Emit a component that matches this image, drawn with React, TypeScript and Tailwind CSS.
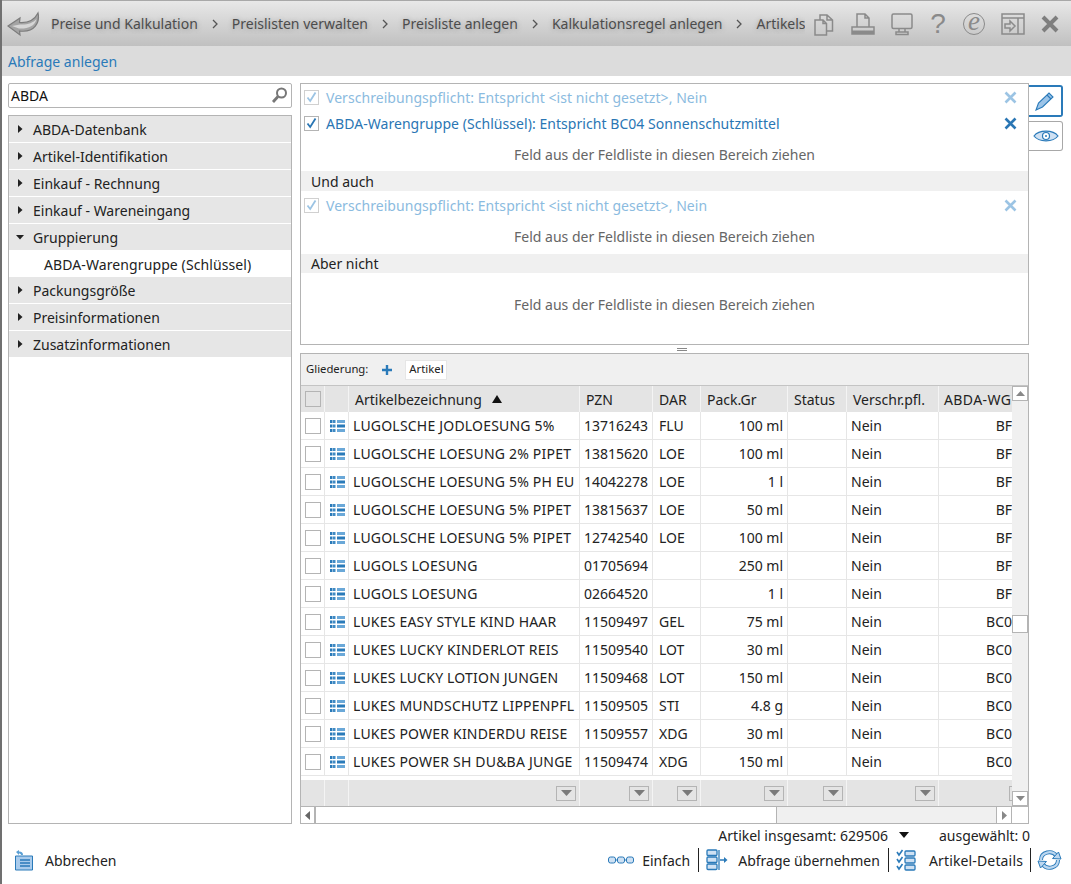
import React from 'react';

const crumbs = ['Preise und Kalkulation', 'Preislisten verwalten', 'Preisliste anlegen', 'Kalkulationsregel anlegen'];
const tree = ['ABDA-Datenbank', 'Artikel-Identifikation', 'Einkauf - Rechnung', 'Einkauf - Wareneingang'];
const treeBottom = ['Packungsgröße', 'Preisinformationen', 'Zusatzinformationen'];

const rows = [
  ['LUGOLSCHE JODLOESUNG 5%', '13716243', 'FLU', '100 ml', 'BF'],
  ['LUGOLSCHE LOESUNG 2% PIPET', '13815620', 'LOE', '100 ml', 'BF'],
  ['LUGOLSCHE LOESUNG 5% PH EU', '14042278', 'LOE', '1 l', 'BF'],
  ['LUGOLSCHE LOESUNG 5% PIPET', '13815637', 'LOE', '50 ml', 'BF'],
  ['LUGOLSCHE LOESUNG 5% PIPET', '12742540', 'LOE', '100 ml', 'BF'],
  ['LUGOLS LOESUNG', '01705694', '', '250 ml', 'BF'],
  ['LUGOLS LOESUNG', '02664520', '', '1 l', 'BF'],
  ['LUKES EASY STYLE KIND HAAR', '11509497', 'GEL', '75 ml', 'BC0'],
  ['LUKES LUCKY KINDERLOT REIS', '11509540', 'LOT', '30 ml', 'BC0'],
  ['LUKES LUCKY LOTION JUNGEN', '11509468', 'LOT', '150 ml', 'BC0'],
  ['LUKES MUNDSCHUTZ LIPPENPFL', '11509505', 'STI', '4.8 g', 'BC0'],
  ['LUKES POWER KINDERDU REISE', '11509557', 'XDG', '30 ml', 'BC0'],
  ['LUKES POWER SH DU&BA JUNGE', '11509474', 'XDG', '150 ml', 'BC0'],
];

const HeadIcon = ({ children }: { children: React.ReactNode }) => (
  <svg width="26" height="26" viewBox="0 0 26 26" fill="none" stroke="#8a8a8a" strokeWidth="1.5" className="shrink-0">
    {children}
  </svg>
);

const CloseX = ({ color }: { color: string }) => (
  <svg width="13" height="13" viewBox="0 0 13 13" stroke={color} strokeWidth="2.6" className="shrink-0">
    <path d="M1.5 1.5 L11.5 11.5 M11.5 1.5 L1.5 11.5" />
  </svg>
);

const Check = ({ color, border }: { color: string; border: string }) => (
  <svg width="15" height="15" viewBox="0 0 15 15" fill="none" className="shrink-0">
    <rect x="0.5" y="0.5" width="14" height="14" fill="#fff" stroke={border} />
    <path d="M3.5 7.5 L6.2 11 L11.5 2.5" stroke={color} strokeWidth="1.8" />
  </svg>
);

const ListIcon = () => (
  <svg width="15" height="12" viewBox="0 0 15 12" className="ml-[2px] shrink-0">
    {[0, 4.5, 9].map((y) => (
      <g key={y}>
        <rect x="0" y={y} width="2.5" height="3" fill="#2a7ab9" />
        <rect x="3" y={y} width="2.5" height="3" fill="#3f8ac4" />
        <rect x="7" y={y} width="8" height="3" fill={y === 4.5 ? '#2a7ab9' : '#6aa8d8'} />
      </g>
    ))}
  </svg>
);

const Triangle = ({ open }: { open?: boolean }) => (
  <svg width="8" height="8" viewBox="0 0 8 8" className="shrink-0">
    {open ? <path d="M0 2 H8 L4 6.5 Z" fill="#222" /> : <path d="M2 0 L6.5 4 L2 8 Z" fill="#222" />}
  </svg>
);

const Filter = () => (
  <div className="w-[20px] h-[15px] border border-[#b4b4b4] flex items-center justify-center shrink-0">
    <svg width="11" height="6" viewBox="0 0 11 6"><path d="M0 0 H11 L5.5 6 Z" fill="#7a7a7a" /></svg>
  </div>
);

const TreeItem = ({ label, open }: { label: string; open?: boolean }) => (
  <div className="h-[26px] mb-px bg-[#e6e6e6] flex items-center pl-[7px] gap-[9px] text-[14px] text-[#222]">
    <Triangle open={open} />
    <span>{label}</span>
  </div>
);

const Condition = ({ text, light }: { text: string; light?: boolean }) => (
  <div className={`flex items-center h-[26px] pl-[3px] pr-[11px] text-[14px] tracking-[0.05px] ${light ? 'text-[#8bbbe0]' : 'text-[#2a76b4]'}`}>
    <Check color={light ? '#9cc4e4' : '#2a76b4'} border={light ? '#d0d0d0' : '#b4b4b4'} />
    <span className="ml-[7px] flex-1">{text}</span>
    <CloseX color={light ? '#9cc4e4' : '#2a76b4'} />
  </div>
);

const DropHint = ({ className }: { className: string }) => (
  <div className={`flex items-center justify-center text-[14px] text-[#666] ${className}`}>
    Feld aus der Feldliste in diesen Bereich ziehen
  </div>
);

const Sep = () => <div className="w-px h-[24px] bg-[#222] shrink-0" />;

export default function App() {
  return (
    <div className="w-[1071px] h-[884px] overflow-hidden bg-white border-l-2 border-[#707070] flex flex-col text-[#222] font-['Noto_Sans','Open_Sans',sans-serif]">
      {/* Title bar */}
      <div className="h-[46px] shrink-0 border-t border-[#a8a8a8] bg-gradient-to-b from-[#e8e8e8] to-[#c0c0c0] flex items-center">
        <svg width="36" height="28" viewBox="0 0 36 28" className="ml-[5px] shrink-0">
          <path d="M1 16 L13 8 L12.5 12.5 C20 13 27 11 31 3 C33 12 28 23 12.5 21 L13 25 Z" fill="#a4a4a4" stroke="#7c7c7c" strokeWidth="1.2" />
          <path d="M5 16 L13 14.5 C20 15 26 13 29.5 9 C28 16 21 19 12 18.5 Z" fill="#d6d6d6" />
        </svg>
        <div className="ml-[8px] w-[754px] shrink-0 overflow-hidden flex items-center whitespace-nowrap text-[14px] text-[#4c4c4c] [text-shadow:0_1px_5px_#999]">
          {crumbs.map((c) => (
            <React.Fragment key={c}>
              <span className="shrink-0">{c}</span>
              <svg width="6" height="10" viewBox="0 0 6 10" fill="none" stroke="#555" strokeWidth="1.3" className="mx-[14px] shrink-0">
                <path d="M1 1 L5 5 L1 9" />
              </svg>
            </React.Fragment>
          ))}
          <span className="shrink-0">Artikels</span>
        </div>
        <div className="flex items-center ml-[6px]">
          <HeadIcon>
            <path d="M8 9 H12 L15.5 12.5 V24 H4 V9 Z M12 9 V12.5 H15.5" />
            <path d="M9 9 V4 H16 L21.5 9 V20 H15.5 M16 4 V9 H21.5" />
          </HeadIcon>
          <div className="ml-[13px]">
            <HeadIcon>
              <path d="M7 16 V3 H15 L19 7 V16 M15 3 V7 H19 M2 16 H24 V23 H2 Z" />
              <rect x="2" y="19.5" width="22" height="3.5" fill="#8a8a8a" stroke="none" />
            </HeadIcon>
          </div>
          <div className="ml-[13px]">
            <HeadIcon>
              <rect x="3" y="3" width="20" height="14.5" rx="1.5" />
              <path d="M10 17.5 V21 M16 17.5 V21" />
              <rect x="7" y="21" width="12" height="2.5" />
            </HeadIcon>
          </div>
          <div className="ml-[10px] w-[26px] text-center text-[28px] leading-[26px] text-[#8a8a8a] font-['Liberation_Sans',sans-serif]">?</div>
          <div className="ml-[10px] w-[26px] flex justify-center">
            <div className="w-[22px] h-[22px] rounded-full border-[1.5px] border-[#8a8a8a] flex items-center justify-center text-[27px] leading-none italic text-[#8a8a8a] font-['Liberation_Serif',serif] pb-[5px]">e</div>
          </div>
          <div className="ml-[13px]">
            <HeadIcon>
              <rect x="2" y="3" width="22" height="20" />
              <path d="M2 7 H24 M18 7 V23 M5 13 H10 V10 L15 15 L10 20 V17 H5 Z" />
            </HeadIcon>
          </div>
          <svg width="20" height="20" viewBox="0 0 20 20" stroke="#7e7e7e" strokeWidth="4" className="ml-[14px] shrink-0">
            <path d="M3 3 L17 17 M17 3 L3 17" />
          </svg>
        </div>
      </div>

      {/* Sub title */}
      <div className="h-[30px] shrink-0 bg-[#dcdcdc] flex items-center pl-[6px] text-[14px] text-[#2a7ab9]">Abfrage anlegen</div>

      <div className="h-[749px] shrink-0 flex pl-[6px] pt-[7px]">
        {/* Left column */}
        <div className="w-[284px] shrink-0 flex flex-col h-[741px]">
          <div className="h-[25px] border border-[#b4b4b4] rounded-[2px] flex items-center pl-[2px] pr-[3px] text-[14px] text-[#111]">
            <span className="flex-1">ABDA</span>
            <svg width="17" height="17" viewBox="0 0 17 17" fill="none" stroke="#777" className="shrink-0">
              <circle cx="10.5" cy="6" r="4.5" strokeWidth="2" />
              <path d="M7 9.5 L2 15" strokeWidth="2.8" />
            </svg>
          </div>
          <div className="mt-[7px] flex-1 border border-[#b4b4b4]">
            {tree.map((t) => <TreeItem key={t} label={t} />)}
            <TreeItem label="Gruppierung" open />
            <div className="h-[26px] flex items-center pl-[35px] text-[14px] tracking-[0.1px]">ABDA-Warengruppe (Schlüssel)</div>
            {treeBottom.map((t) => <TreeItem key={t} label={t} />)}
          </div>
        </div>

        {/* Right column */}
        <div className="ml-[8px] w-[729px] shrink-0 flex flex-col h-[741px]">
          <div className="h-[262px] shrink-0 border border-[#b4b4b4] flex flex-col">
            <Condition text="Verschreibungspflicht: Entspricht <ist nicht gesetzt>, Nein" light />
            <Condition text="ABDA-Warengruppe (Schlüssel): Entspricht BC04 Sonnenschutzmittel" />
            <DropHint className="h-[35px] shrink-0 pt-[1px]" />
            <div className="h-[20px] shrink-0 bg-[#f0f0f0] flex items-center pl-[10px] text-[14px]">Und auch</div>
            <div className="mt-[1px]"><Condition text="Verschreibungspflicht: Entspricht <ist nicht gesetzt>, Nein" light /></div>
            <DropHint className="h-[36px] shrink-0" />
            <div className="h-[19px] shrink-0 bg-[#f0f0f0] flex items-center pl-[10px] text-[14px]">Aber nicht</div>
            <DropHint className="flex-1 pb-[8px]" />
          </div>

          {/* Splitter */}
          <div className="h-[8px] shrink-0 flex flex-col items-center justify-center gap-[1px]">
            <div className="w-[10px] h-px bg-[#888] ml-[34px]" />
            <div className="w-[10px] h-px bg-[#888] ml-[34px]" />
          </div>

          {/* Grid */}
          <div className="flex-1 min-h-0 border border-[#b4b4b4] flex flex-col">
            <div className="h-[32px] shrink-0 bg-[#f0f0f0] border-b border-[#c4c4c4] flex items-center pl-[5px] text-[11.3px]">
              <span>Gliederung:</span>
              <svg width="10" height="10" viewBox="0 0 10 10" stroke="#2a7ab9" strokeWidth="2.4" className="ml-[14px] shrink-0">
                <path d="M5 0 V10 M0 5 H10" />
              </svg>
              <div className="ml-[13px] h-[20px] w-[42px] pl-[3px] bg-white border border-[#e6e6e6] flex items-center">Artikel</div>
            </div>

            <div className="flex-1 min-h-0 flex">
              <div className="w-[711px] shrink-0 flex flex-col overflow-hidden">
                {/* Header row */}
                <div className="h-[26px] shrink-0 bg-[#e4e4e4] flex text-[14px]">
                  <div className="w-[24px] shrink-0 border-r border-[#f4f4f4] flex items-center justify-center">
                    <div className="w-[16px] h-[16px] border border-[#b4b4b4]" />
                  </div>
                  <div className="w-[24px] shrink-0 border-r border-[#f4f4f4]" />
                  <div className="w-[231px] shrink-0 border-r border-[#f4f4f4] flex items-center pl-[6px]">
                    Artikelbezeichnung
                    <svg width="10" height="8" viewBox="0 0 10 8" className="ml-[10px]"><path d="M5 0 L10 8 H0 Z" fill="#111" /></svg>
                  </div>
                  <div className="w-[73px] shrink-0 border-r border-[#f4f4f4] flex items-center pl-[6px]">PZN</div>
                  <div className="w-[48px] shrink-0 border-r border-[#f4f4f4] flex items-center pl-[6px]">DAR</div>
                  <div className="w-[87px] shrink-0 border-r border-[#f4f4f4] flex items-center pl-[6px]">Pack.Gr</div>
                  <div className="w-[59px] shrink-0 border-r border-[#f4f4f4] flex items-center pl-[6px]">Status</div>
                  <div className="w-[92px] shrink-0 border-r border-[#f4f4f4] flex items-center pl-[6px]">Verschr.pfl.</div>
                  <div className="w-[73px] shrink-0 flex items-center pl-[5px] overflow-hidden whitespace-nowrap tracking-[0.4px]">ABDA-WG</div>
                </div>

                {/* Rows */}
                <div className="h-[368px] shrink-0 overflow-hidden">
                  {rows.map((r) => (
                    <div key={r[1]} className="h-[28px] flex text-[14px] border-b border-[#e6e6e6]">
                      <div className="w-[24px] shrink-0 border-r border-[#e6e6e6] flex items-center justify-center">
                        <div className="w-[16px] h-[16px] border border-[#b4b4b4]" />
                      </div>
                      <div className="w-[24px] shrink-0 border-r border-[#e6e6e6] flex items-center justify-center"><ListIcon /></div>
                      <div className="w-[231px] shrink-0 border-r border-[#e6e6e6] flex items-center pl-[4px] whitespace-nowrap overflow-hidden tracking-[0.2px]">{r[0]}</div>
                      <div className="w-[73px] shrink-0 border-r border-[#e6e6e6] flex items-center pl-[4px]">{r[1]}</div>
                      <div className="w-[48px] shrink-0 border-r border-[#e6e6e6] flex items-center pl-[6px]">{r[2]}</div>
                      <div className="w-[87px] shrink-0 border-r border-[#e6e6e6] flex items-center justify-end pr-[4px]">{r[3]}</div>
                      <div className="w-[59px] shrink-0 border-r border-[#e6e6e6]" />
                      <div className="w-[92px] shrink-0 border-r border-[#e6e6e6] flex items-center pl-[4px]">Nein</div>
                      <div className="w-[73px] shrink-0 flex items-center justify-end">{r[4]}</div>
                    </div>
                  ))}
                </div>

                {/* Filter row */}
                <div className="h-[26px] shrink-0 bg-[#e4e4e4] flex">
                  <div className="w-[24px] shrink-0 border-r border-[#f4f4f4]" />
                  <div className="w-[24px] shrink-0 border-r border-[#f4f4f4]" />
                  {['w-[231px]', 'w-[73px]', 'w-[48px]', 'w-[87px]', 'w-[59px]', 'w-[92px]'].map((w, i) => (
                    <div key={i} className={`${w} shrink-0 border-r border-[#f4f4f4] flex items-center justify-end pr-[3px]`}><Filter /></div>
                  ))}
                  <div className="w-[73px] shrink-0 flex items-center pl-[70px] overflow-hidden"><Filter /></div>
                </div>
              </div>

              {/* Vertical scrollbar */}
              <div className="flex-1 bg-[#f0f0f0] flex flex-col">
                <div className="h-[15px] shrink-0 bg-white border border-[#b4b4b4] flex items-center justify-center">
                  <svg width="9" height="5" viewBox="0 0 9 5"><path d="M4.5 0 L9 5 H0 Z" fill="#888" /></svg>
                </div>
                <div className="h-[214px] shrink-0" />
                <div className="h-[18px] shrink-0 bg-white border border-[#b4b4b4]" />
                <div className="flex-1" />
                <div className="h-[15px] shrink-0 bg-white border border-[#b4b4b4] flex items-center justify-center">
                  <svg width="9" height="5" viewBox="0 0 9 5"><path d="M0 0 H9 L4.5 5 Z" fill="#888" /></svg>
                </div>
              </div>
            </div>

            {/* Horizontal scrollbar */}
            <div className="h-[17px] shrink-0 flex border-t border-[#b4b4b4]">
              <div className="w-[15px] shrink-0 border-r-2 border-[#b4b4b4] flex items-center justify-center">
                <svg width="5" height="9" viewBox="0 0 5 9"><path d="M5 0 V9 L0 4.5 Z" fill="#666" /></svg>
              </div>
              <div className="w-[461px] shrink-0 bg-white border-r border-[#b4b4b4]" />
              <div className="w-[219px] shrink-0 bg-[#f0f0f0]" />
              <div className="w-[16px] shrink-0 bg-white border-x border-[#b4b4b4] flex items-center justify-center">
                <svg width="5" height="9" viewBox="0 0 5 9"><path d="M0 0 V9 L5 4.5 Z" fill="#888" /></svg>
              </div>
              <div className="flex-1" />
            </div>
          </div>
        </div>

        {/* Mode buttons */}
        <div className="shrink-0 flex flex-col gap-[4px] pt-[2px]">
          <div className="w-[34px] h-[32px] border-2 border-l-0 border-[#2a7ab9] rounded-r-[3px] flex items-center justify-center">
            <svg width="20" height="20" viewBox="0 0 20 20" className="shrink-0">
              <path d="M1 19 L3.5 12 L14 2 L18 6 L7.5 16 Z" fill="#9cc4e8" stroke="#2a7ab9" strokeWidth="1.1" />
              <path d="M12 4 L16 8" stroke="#2a7ab9" strokeWidth="1.1" />
            </svg>
          </div>
          <div className="w-[34px] h-[30px] border border-l-0 border-[#a8a8a8] rounded-r-[3px] flex items-center justify-center">
            <svg width="26" height="14" viewBox="0 0 26 14" fill="none" className="shrink-0">
              <path d="M1 7 C6 0.5 20 0.5 25 7 C20 13.5 6 13.5 1 7 Z" fill="#cfe1f3" stroke="#2a7ab9" strokeWidth="1.2" />
              <circle cx="13" cy="7" r="3.5" fill="#fff" stroke="#2a7ab9" strokeWidth="1.2" />
              <circle cx="13" cy="7" r="1" fill="#2a7ab9" />
            </svg>
          </div>
        </div>
      </div>

      {/* Totals */}
      <div className="h-[20px] shrink-0 flex items-center justify-end pr-[41px] text-[14px]">
        <span>Artikel insgesamt: 629506</span>
        <svg width="10" height="6" viewBox="0 0 10 6" className="ml-[11px]"><path d="M0 0 H10 L5 6 Z" fill="#111" /></svg>
        <span className="ml-[30px]">ausgewählt: 0</span>
      </div>

      {/* Actions */}
      <div className="h-[30px] shrink-0 flex items-center text-[14px] pl-[12px] pr-[9px]">
        <svg width="20" height="22" viewBox="0 0 20 22" className="shrink-0">
          <path d="M1.5 7 H18.5 V21 H1.5 Z" fill="#a9cbec" stroke="#2a7ab9" />
          <path d="M6 11 H16 M6 14 H16 M6 17 H16" stroke="#2a7ab9" strokeWidth="1.6" />
          <path d="M2 3 L5 1 V2.5 C8 2.5 9 4 9 6 L7 6 C7 5 6 4.5 5 4.5 V6 Z" fill="#5a9fd4" />
        </svg>
        <span className="ml-[11px]">Abbrechen</span>
        <div className="flex-1" />
        <svg width="26" height="8" viewBox="0 0 26 8" fill="#cfe1f3" stroke="#2a7ab9" className="shrink-0">
          <rect x="0.5" y="1" width="7" height="6" rx="2" />
          <rect x="9.5" y="1" width="7" height="6" rx="2" />
          <rect x="18.5" y="1" width="7" height="6" rx="2" />
          <path d="M7.5 4 H9.5 M16.5 4 H18.5" />
        </svg>
        <span className="ml-[8px]">Einfach</span>
        <div className="ml-[8px]"><Sep /></div>
        <svg width="22" height="22" viewBox="0 0 22 22" fill="#cfe1f3" stroke="#2a7ab9" strokeWidth="1.3" className="ml-[7px] shrink-0">
          <rect x="1" y="1" width="10" height="5.5" rx="1" />
          <rect x="1" y="8" width="10" height="5.5" rx="1" />
          <rect x="1" y="15" width="10" height="5.5" rx="1" />
          <path d="M13 1 V21 M14 11 H18" />
          <path d="M18 8 L21.5 11 L18 14 Z" fill="#2a7ab9" stroke="none" />
        </svg>
        <span className="ml-[10px]">Abfrage übernehmen</span>
        <div className="ml-[8px]"><Sep /></div>
        <svg width="20" height="22" viewBox="0 0 20 22" fill="#cfe1f3" stroke="#2a7ab9" strokeWidth="1.3" className="ml-[7px] shrink-0">
          <rect x="9" y="2" width="10" height="5" rx="1" />
          <rect x="9" y="9" width="10" height="5" rx="1" />
          <rect x="9" y="16" width="10" height="5" rx="1" />
          <path d="M1 3 L3 6 L6.5 1 M1 10 L3 13 L6.5 8 M1 17 L3 20 L6.5 15" fill="none" strokeWidth="1.6" />
        </svg>
        <span className="ml-[13px] tracking-[0.15px]">Artikel-Details</span>
        <div className="ml-[7px]"><Sep /></div>
        <svg width="25" height="22" viewBox="0 0 25 22" className="ml-[6px] shrink-0">
          <g fill="none" strokeLinecap="butt">
            <path d="M4 11 C4 3 15 0.5 19.5 7" stroke="#2a7ab9" strokeWidth="4" />
            <path d="M21 11 C21 19 10 21.5 5.5 15" stroke="#2a7ab9" strokeWidth="4" />
            <path d="M4 11 C4 3 15 0.5 19.5 7" stroke="#bcd7f0" strokeWidth="2.2" />
            <path d="M21 11 C21 19 10 21.5 5.5 15" stroke="#bcd7f0" strokeWidth="2.2" />
          </g>
          <path d="M15.5 9.5 L24 10 L21.5 3 Z" fill="#bcd7f0" stroke="#2a7ab9" />
          <path d="M9.5 12.5 L1 12 L3.5 19 Z" fill="#bcd7f0" stroke="#2a7ab9" />
        </svg>
      </div>
    </div>
  );
}
